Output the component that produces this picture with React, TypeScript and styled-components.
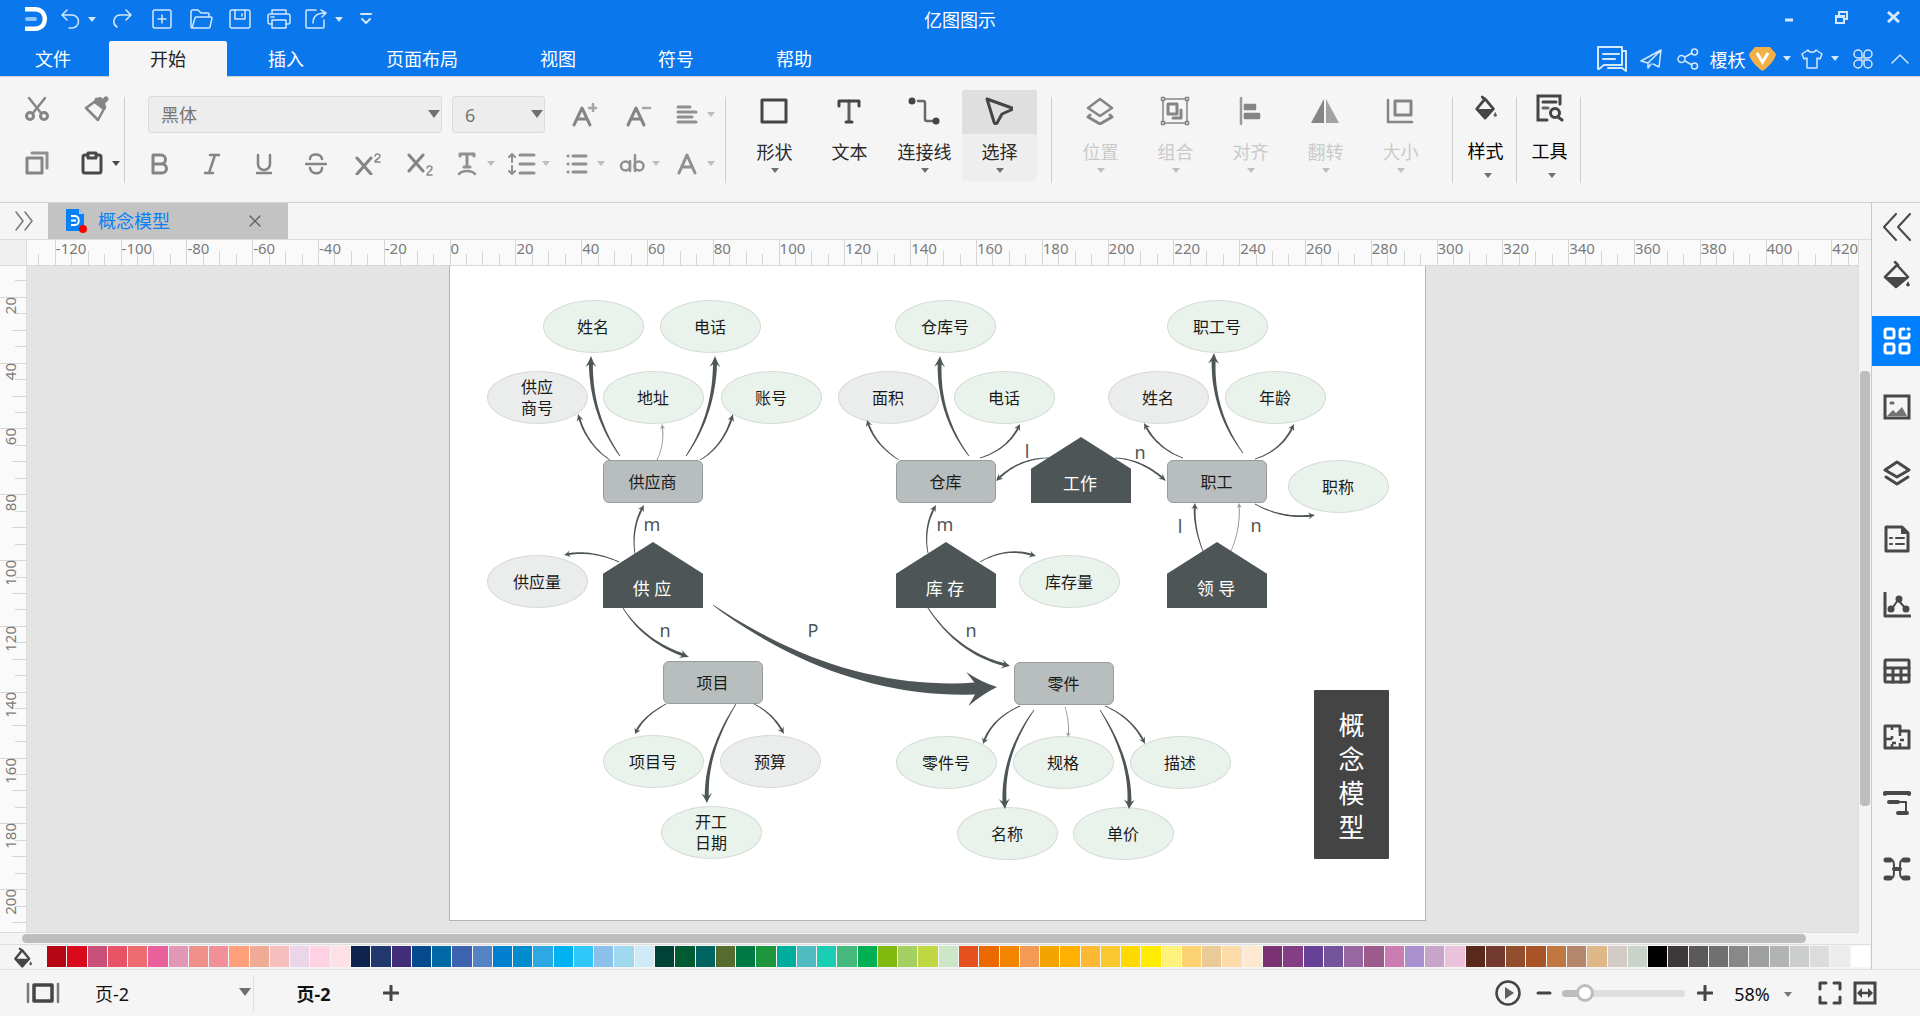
import React from 'react';
import styled, { createGlobalStyle, css } from 'styled-components';

const GlobalStyle = createGlobalStyle`
  *, *::before, *::after { box-sizing: border-box; }
  html, body { margin: 0; padding: 0; }
  body {
    font-family: "Noto Sans", "Noto Sans CJK SC", sans-serif;
    font-size: 18px;
    color: #222;
    background: #f5f5f5;
  }
  button, input, select { font: inherit; color: inherit; }
  svg { display: block; flex: none; }
`;

/* ---------- icons ---------- */

type IconProps = { w: number; h: number; sw?: number; outW?: number; outH?: number; children: React.ReactNode };
const Icon = ({ w, h, sw = 2, outW, outH, children }: IconProps) => (
  <svg
    width={outW ?? w}
    height={outH ?? h}
    viewBox={`0 0 ${w} ${h}`}
    fill="none"
    stroke="currentColor"
    strokeWidth={sw}
    strokeLinecap="round"
    strokeLinejoin="round"
    aria-hidden="true"
  >
    {children}
  </svg>
);

const F = { fill: 'currentColor', stroke: 'none' };

const Caret = ({ size = 8 }: { size?: number }) => (
  <svg width={size} height={size === 8 ? 5 : 8} viewBox="0 0 8 5" preserveAspectRatio="none" aria-hidden="true">
    <path d="M0 0h8L4 5z" fill="currentColor" />
  </svg>
);

const Bucket = ({ w, h }: { w: number; h: number }) => (
  <Icon w={26} h={28} outW={w} outH={h} sw={3}>
    <path d="M9 2l3 3M12 4l9 11-9 10-9-10z" />
    <path d="M3 15h18l-7 9q-2 2-4 0z" {...F} />
    <path d="m23 18 2 4q-2 3-4 0z" {...F} opacity=".85" />
  </Icon>
);

const icons = {
  logo: (
    <svg width="22" height="24" viewBox="0 0 22 24" fill="none" aria-hidden="true">
      <path d="M0 2.2h10c6 0 9.800 4.200 9.800 9.800s-3.800 9.800-9.800 9.800H0" stroke="#fff" strokeWidth="4.400" />
      <path d="M2 12h8" stroke="#8fc1fa" strokeWidth="4" strokeLinecap="round" />
    </svg>
  ),
  undo: <Icon w={20} h={20} sw={1.5}><path d="M7 1 2 6l5 5M2 6h10a6 6 0 0 1 0 13H9" /></Icon>,
  redo: <Icon w={20} h={20} sw={1.5}><path d="m13 1 5 5-5 5M18 6H8a6.500 6.500 0 0 0-4 12" /></Icon>,
  add: <Icon w={20} h={20} sw={1.500}><rect x="1" y="1" width="18" height="18" rx="2" /><path d="M10 6v8M6 10h8" /></Icon>,
  folder: <Icon w={24} h={20} sw={1.500}><path d="M2 17V3a2 2 0 0 1 2-2h5l3 3h7a1 1 0 0 1 1 1v3M3 19 6 9a1 1 0 0 1 1-1h15a1 1 0 0 1 1 1l-2 9a1 1 0 0 1-1 1H3a1 1 0 0 1-1-1" /></Icon>,
  save: <Icon w={22} h={20} sw={1.500}><rect x="1" y="1" width="20" height="18" rx="2" /><path d="M6 1v9h10V1M13 5v2" /></Icon>,
  print: <Icon w={24} h={20} sw={1.500}><path d="M5 5V1h14v4M5 15H3a2 2 0 0 1-2-2V7a2 2 0 0 1 2-2h18a2 2 0 0 1 2 2v6a2 2 0 0 1-2 2h-2M4 8h3" /><path d="M5 11h14v8H5z" /></Icon>,
  exportTo: <Icon w={22} h={20} sw={1.500}><path d="M11 1H2a1 1 0 0 0-1 1v16a1 1 0 0 0 1 1h16a1 1 0 0 0 1-1v-7M8 14c0-6 4-10 12-10M16 1l5 3-4 4" /></Icon>,
  more: <Icon w={12} h={12} sw={2}><path d="M1 1h10M2 6l4 4 4-4" /></Icon>,
  minimize: <Icon w={10} h={12} sw={3}><path d="M1 9h8" strokeLinecap="butt" /></Icon>,
  restore: <Icon w={13} h={13} sw={2}><path d="M4 4V1h8v7H9M1 5h8v7H1zM1 6h8" strokeLinejoin="miter" /></Icon>,
  close: <Icon w={13} h={12} sw={3}><path d="m1 1 11 10M12 1 1 11" strokeLinecap="butt" /></Icon>,
  comment: <Icon w={30} h={26} sw={2}><path d="M1 1h24v18H7l-5 4H1zM26 5h3v20l-4-3H11M6 8h16M6 13h12" /></Icon>,
  plane: <Icon w={22} h={20} sw={1.500}><path d="M21 1 1 12l7 2L21 1l-2 17-6-3M8 14v5l3-4" /></Icon>,
  share: <Icon w={22} h={22} sw={1.500}><circle cx="4.500" cy="11" r="3.500" /><circle cx="17.500" cy="4" r="3" /><circle cx="17.500" cy="18" r="3" /><path d="m8 9 7-4M8 13l7 4" /></Icon>,
  badge: (
    <svg width="27" height="24" viewBox="0 0 27 24" aria-hidden="true">
      <path d="M6 0h15l6 7c0 5-9 14-12 16q-1.500 1.500-3 0C9 21 0 12 0 7z" fill="#f4b048" />
      <path d="m8 6 5.500 9L19 6" fill="none" stroke="#fff" strokeWidth="3" />
    </svg>
  ),
  shirt: <Icon w={22} h={20} sw={1.500}><path d="M7 1 1 5l2 5 3-1v10h10V9l3 1 2-5-6-4c-1 3-7 3-8 0z" /></Icon>,
  clover: <Icon w={20} h={20} sw={1.500}><path d="M9 9V5a4 4 0 1 0-4 4zM11 9V5a4 4 0 1 1 4 4zM9 11v4a4 4 0 1 1-4-4zM11 11v4a4 4 0 1 0 4-4z" /></Icon>,
  up: <Icon w={18} h={10} sw={1.500}><path d="m1 9 8-8 8 8" /></Icon>,

  cut: <Icon w={24} h={26} sw={2.500}><circle cx="5" cy="20" r="3.500" strokeWidth="3" /><circle cx="19" cy="20" r="3.500" strokeWidth="3" /><path d="M4 2l12 15M20 2 8 17" /></Icon>,
  painter: <Icon w={28} h={26} sw={2.500}><path d="M5 12 16 4l8 7-7 13z" /><path d="m14 2 6-1 4 4 1 8-3 1-9-7z" {...F} /><path d="m21 7 4-4" strokeWidth="5" /></Icon>,
  copy: <Icon w={24} h={24} sw={3}><rect x="2" y="7" width="15" height="15" /><path d="M7 2h15v15" strokeWidth="3" opacity=".9" /></Icon>,
  paste: <Icon w={22} h={24} sw={3}><rect x="2" y="4" width="18" height="18" rx="2" /><path d="M7 2h8v5H7z" fill="#f5f5f5" /></Icon>,
  fontUp: <Icon w={26} h={24} sw={3}><path d="m2 22 8-17 8 17M5 16h10" /><path d="M21 1v7M17 5h7" strokeWidth="2.500" opacity=".7" /></Icon>,
  fontDown: <Icon w={26} h={24} sw={3}><path d="m2 22 8-17 8 17M5 16h10" /><path d="M17 5h7" strokeWidth="2.500" opacity=".7" /></Icon>,
  align: <Icon w={22} h={20} sw={3}><path d="M2 2h12M2 7h18M2 12h14M2 17h18" /></Icon>,
  bold: <Icon w={20} h={22} sw={3}><path d="M3 2h8a4 4 0 0 1 0 9H3zM3 11h9a4 4 0 0 1 0 9H3z" /></Icon>,
  italic: <Icon w={20} h={22} sw={2.500}><path d="M8 2h9M3 20h8M13 2 7 20" /></Icon>,
  underline: <Icon w={18} h={22} sw={2.500}><path d="M3 2v9a6 6 0 0 0 12 0V2M2 20h14" /></Icon>,
  strike: <Icon w={22} h={22} sw={2.500}><path d="M1 11h20M17 6c-1-6-12-6-12 0M5 15c1 7 12 7 12 0" /></Icon>,
  sup: <Icon w={26} h={22} sw={3}><path d="m2 5 14 16M16 5 2 21" /><path d="M20 3c1-3 5-2 5 0 0 3-5 3-5 6h5" strokeWidth="1.500" /></Icon>,
  sub: <Icon w={26} h={24} sw={3}><path d="m2 3 14 16M16 3 2 19" /><path d="M20 16c1-3 5-2 5 0 0 3-5 4-5 7h5" strokeWidth="1.500" /></Icon>,
  textEdge: <Icon w={20} h={24} sw={3}><path d="M3 4V2h14v2M10 2v13M7 15h6" /><path d="M2 22c3-4 13-4 16 0" strokeWidth="2.500" /></Icon>,
  spacing: <Icon w={28} h={24} sw={3}><path d="M12 3h14M12 12h14M12 21h14" /><path d="M4 2v8M1 5l3-3 3 3M4 14v8M1 19l3 3 3-3" strokeWidth="2" /></Icon>,
  list: <Icon w={22} h={22} sw={3}><path d="M7 3h13M7 11h13M7 19h13M2 3h.1M2 11h.1M2 19h.1" /></Icon>,
  highlight: <Icon w={26} h={20} sw={2.500}><circle cx="6.500" cy="12" r="4.500" /><path d="M11 7v10" /><path d="M16 1v16" /><circle cx="20" cy="12" r="4.500" /></Icon>,
  fontColor: <Icon w={20} h={22} sw={3}><path d="m2 20 8-18 8 18M5 14h10" /></Icon>,

  shape: <Icon w={28} h={26} sw={3}><rect x="2" y="2" width="24" height="22" /></Icon>,
  text: <Icon w={24} h={26} sw={3}><path d="M2 8V3h20v5M9 24h6" /><path d="M12 3v20" opacity=".85" /></Icon>,
  connector: <Icon w={32} h={28} sw={2.500}><path d="M10 4h5a2 2 0 0 1 2 2v16a2 2 0 0 0 2 2h5" opacity=".8" /><circle cx="4" cy="4" r="3.500" {...F} /><circle cx="28" cy="24" r="3.500" {...F} /></Icon>,
  select: <Icon w={28} h={28} sw={3}><path d="M2 2 27 11q1 1-1 2l-9 4-5 9q-2 2-3-1z" /></Icon>,
  position: <Icon w={28} h={28} sw={2.500}><path d="M14 2 26 11 14 19 2 11z" /><path d="m4 18-2 2 12 7 12-7-2-2" strokeWidth="3" /></Icon>,
  group: <Icon w={30} h={30} sw={1.500}><path d="M3 3h24v24H3z" /><rect x="8" y="8" width="9" height="10" strokeWidth="3" /><path d="M21 14v8h-8" strokeWidth="3" /><path d="M1.500 1.500h3v3h-3zM25.500 1.500h3v3h-3zM1.500 25.500h3v3h-3zM25.500 25.500h3v3h-3z" fill="#f5f5f5" /></Icon>,
  arrange: <Icon w={22} h={28} sw={2.500}><path d="M2 1v26" opacity=".8" /><path d="M6 8h10v4H6zM6 17h14v4H6z" fill="currentColor" /></Icon>,
  flip: <Icon w={28} h={26}><path d="M13 1v24H0z" {...F} /><path d="M15 1v24h13z" {...F} opacity=".75" /></Icon>,
  size: <Icon w={28} h={26} sw={2.500}><path d="M2 2v22h24" /><rect x="9" y="3" width="16" height="14" strokeWidth="3" /></Icon>,
  tools: <Icon w={28} h={28} sw={3}><path d="M24 10V2H2v24h9M7 8h13" strokeLinejoin="miter" /><path d="M7 14h5" opacity=".8" /><circle cx="19" cy="19" r="4.500" /><path d="m22 23 4 3" /></Icon>,

  expand: <Icon w={20} h={20} sw={1.500}><path d="m2 1 7 9-7 9M11 1l7 9-7 9" /></Icon>,
  file: (
    <svg width="22" height="26" viewBox="0 0 22 26" aria-hidden="true">
      <path d="M1 2q0-1 1-1h12l5 5v16q0 1-1 1H2q-1 0-1-1z" fill="#0a80f5" />
      <path d="M14 1l5 5h-5z" fill="#9fcbf8" />
      <path d="M6 8h4c5 0 5 9 0 9H6M6 12.500h5" fill="none" stroke="#fff" strokeWidth="2" />
      <circle cx="18" cy="21" r="4" fill="#f00" />
    </svg>
  ),
  tabClose: <Icon w={12} h={12} sw={1.500}><path d="m1 1 10 10M11 1 1 11" /></Icon>,

  collapse: <Icon w={28} h={28} sw={2}><path d="M13 1 1 14l12 13M27 1 15 14l12 13" /></Icon>,
  sideBucket: <Icon w={28} h={28} sw={2.500}><path d="M12 1l3 3M14 4l11 12-12 10L2 16z" /><path d="M2 16h22L13 27z" {...F} /><path d="m25 20 2 4q-2 3-4 0z" {...F} /></Icon>,
  library: <Icon w={28} h={28} sw={3}><rect x="2" y="2" width="9" height="9" rx="2" /><rect x="2" y="17" width="9" height="9" rx="2" /><rect x="17" y="17" width="9" height="9" rx="2" /><path d="M21 2h-2a2 2 0 0 0-2 2v5a2 2 0 0 0 2 2h5a2 2 0 0 0 2-2V7M25 2h1" /></Icon>,
  image: <Icon w={28} h={26} sw={3}><rect x="2" y="2" width="24" height="22" strokeLinejoin="miter" /><path d="m4 22 6-6 3 3 6-6 5 9z" {...F} opacity=".75" /><path d="M8 9h2" opacity=".8" /></Icon>,
  layers: <Icon w={28} h={28} sw={3}><path d="M14 3 26 11 14 18 2 11z" /><path d="m3 18 11 7 11-7" /></Icon>,
  doc: <Icon w={26} h={28} sw={3}><path d="M2 2h16l6 6v18H2z" /><path d="m17 1 8 8h-8z" {...F} /><path d="M12 13h8M12 19h8M6 13h2M6 19h2" strokeWidth="2" /></Icon>,
  chart: <Icon w={28} h={26} sw={3}><path d="M2 1v23h25" /><path d="m8 18 7-10 9 10" strokeWidth="2" /><circle cx="8" cy="17" r="3.500" {...F} /><circle cx="16" cy="7" r="3.500" {...F} /><circle cx="23" cy="17" r="3.500" {...F} /></Icon>,
  table: <Icon w={28} h={26} sw={3}><rect x="2" y="2" width="24" height="22" rx="1" /><path d="M2 10h24M2 17h24M10 10v14M18 10v14" /></Icon>,
  floor: <Icon w={28} h={26} sw={3}><path d="M2 2h15v5h9v17H2z" /><path d="M2 15h7M9 15v-3M9 2v4M9 20v4M13 19H9M17 7v5M17 16h4M17 19v5" strokeWidth="2.500" strokeLinecap="butt" /></Icon>,
  gantt: <Icon w={28} h={26} sw={3.500}><path d="M2 4V3h24v1M6 12h9M15 23h9" strokeWidth="4" /><path d="M15 12h8v10" strokeWidth="2" /></Icon>,
  mind: <Icon w={28} h={26} sw={2}><path d="M7 4h1c3 0 3 3 3 9s0 9-3 9H7M21 4h-1c-3 0-3 3-3 9s0 9 3 9h1" /><path d="M11 13h6" strokeWidth="4" /><path d="M3 4h4M21 4h4M3 22h4M21 22h4" strokeWidth="5" /></Icon>,

  pages: <Icon w={34} h={24} sw={3.500}><rect x="8" y="4" width="18" height="16" /><path d="M2 3v18M32 3v18" strokeWidth="2.500" opacity=".7" /></Icon>,
  plus: <Icon w={16} h={16} sw={3}><path d="M8 1v14M1 8h14" /></Icon>,
  minus: <Icon w={16} h={16} sw={3}><path d="M2 8h12" /></Icon>,
  play: <Icon w={26} h={26} sw={2.500}><circle cx="13" cy="13" r="11.500" /><path d="M10 7v12l9-6z" {...F} opacity=".85" /></Icon>,
  full: <Icon w={24} h={24} sw={3}><path d="M2 8V2h6M16 2h6v6M22 16v6h-6M8 22H2v-6" /></Icon>,
  fit: <Icon w={24} h={24} sw={3}><rect x="2" y="2" width="20" height="20" strokeLinejoin="miter" /><path d="M6 12h12" strokeWidth="2.500" /><path d="M9 7v10l-5-5zM15 7v10l5-5z" {...F} /></Icon>,
};

/* ---------- shell ---------- */

const Shell = styled.div`
  display: flex;
  flex-direction: column;
  height: 100vh;
  overflow: hidden;
`;

const Plain = styled.button`
  display: flex;
  align-items: center;
  justify-content: center;
  border: 0;
  padding: 0;
  background: none;
  cursor: pointer;
`;

const Header = styled.header`
  background: #0a77ec;
  color: #d3e7fd;
  border-bottom: 1px solid #cfcfcf;
`;

const TitleBar = styled.div`
  display: grid;
  grid-template-columns: 1fr auto 1fr;
  height: 41px;
`;

const AppTitle = styled.h1`
  margin: 0;
  font-size: 18px;
  font-weight: 400;
  line-height: 41px;
  color: #fff;
`;

const QuickBar = styled.div`
  display: flex;
  height: 38px;
  padding-left: 25px;
  align-items: center;
`;

const QuickButton = styled(Plain)<{ $w?: number }>`
  width: ${(p) => p.$w ?? 39}px;
  height: 38px;
  gap: 8px;
`;

const WindowButtons = styled.div`
  display: flex;
  justify-content: flex-end;
  padding-right: 1px;
`;

const WindowButton = styled(Plain)`
  width: 52px;
  height: 34px;
`;

const MenuRow = styled.div`
  display: flex;
  justify-content: space-between;
  height: 35px;
`;

const MenuTabs = styled.nav`
  display: flex;
`;

const MenuTab = styled(Plain)<{ $active?: boolean; $lead?: boolean }>`
  padding: ${(p) => (p.$lead ? '0 38px 0 35px' : '0 41px')};
  height: 36px;
  line-height: 36px;
  color: #fff;
  ${(p) =>
    p.$active &&
    css`
      background: #f5f5f5;
      color: #222;
      border-radius: 2px 2px 0 0;
    `}
`;

const AccountBar = styled.div`
  display: flex;
  align-items: center;
`;

const AccountButton = styled(Plain)<{ $w: number; $gap?: number }>`
  width: ${(p) => p.$w}px;
  height: 34px;
  gap: ${(p) => p.$gap ?? 8}px;
`;

const UserName = styled.span`
  color: #fff;
  margin-right: -4px;
`;

/* ---------- ribbon ---------- */

const Ribbon = styled.div`
  display: flex;
  height: 126px;
  flex: none;
  background: #f5f5f5;
  border-bottom: 1px solid #d2d2d2;
  color: #858585;
`;

const Divider = styled.div`
  width: 1px;
  height: 86px;
  margin-top: 20px;
  background: #cfcfcf;
`;

const Clipboard = styled.div`
  display: grid;
  grid-template-columns: 60px 57px;
  grid-template-rows: 54px 54px;
  padding: 5px 0 0 7px;
`;

const ClipButton = styled(Plain)<{ $start?: boolean; $dark?: boolean }>`
  gap: 9px;
  ${(p) => p.$start && css`justify-content: flex-start; padding-left: 14px;`}
  ${(p) => p.$dark && css`color: #484848;`}
`;

const FontGroup = styled.div`
  width: 600px;
  padding-top: 13px;
`;

const FontRow = styled.div<{ $indent: number }>`
  display: flex;
  align-items: center;
  height: 49px;
  padding-left: ${(p) => p.$indent}px;
`;

const SelectBox = styled.label<{ $w: number }>`
  position: relative;
  display: block;
  width: ${(p) => p.$w}px;
  & + & { margin-left: 10px; }
`;

const SelectCaret = styled.span`
  position: absolute;
  right: 2px;
  top: 50%;
  margin-top: -5px;
  color: #707070;
  pointer-events: none;
`;

const FieldSelect = styled.select`
  appearance: none;
  width: 100%;
  height: 37px;
  padding: 0 20px 0 12px;
  border: 1px solid #dcdcdf;
  border-radius: 3px;
  background: #ededed;
  color: #777;
`;

const FormatButton = styled(Plain)<{ $w: number }>`
  width: ${(p) => p.$w}px;
  height: 40px;
`;

const DropButton = styled(Plain)`
  width: 55px;
  height: 40px;
  justify-content: flex-start;
  padding-left: 7px;
  gap: 8px;
  color: #909090;
  & > svg:last-child { color: #bdbdbd; }
`;

const IconSlot = styled.span`
  display: flex;
  justify-content: center;
  width: 24px;
`;

const Spacer = styled.span<{ $w: number }>`
  width: ${(p) => p.$w}px;
`;

const ToolGroup = styled.div`
  display: flex;
  align-items: flex-start;
  padding: 13px 14px 0 11px;
`;

const BigButton = styled(Plain)<{ $active?: boolean; $off?: boolean; $strong?: boolean }>`
  flex-direction: column;
  justify-content: flex-start;
  width: ${(p) => (p.$strong ? 63 : 75)}px;
  height: 91px;
  padding-left: ${(p) => (p.$strong ? 2 : 0)}px;
  border-radius: 3px;
  overflow: hidden;
  color: ${(p) => (p.$off ? '#858585' : '#454545')};
  background: ${(p) => (p.$active ? '#eee' : 'none')};
`;

const BigIcon = styled.span<{ $active?: boolean; $strong?: boolean }>`
  display: flex;
  align-items: center;
  justify-content: center;
  width: 100%;
  height: 44px;
  padding: ${(p) => (p.$strong ? '0 0 8px' : '0 2px 2px 0')};
  background: ${(p) => (p.$active ? '#dfdfdf' : 'none')};
`;

const BigLabel = styled.span<{ $off?: boolean; $strong?: boolean }>`
  padding-top: ${(p) => (p.$strong ? 5 : 6)}px;
  line-height: 24px;
  white-space: nowrap;
  color: ${(p) => (p.$off ? '#cacaca' : p.$strong ? '#000' : '#2a2a2a')};
`;

const BigCaret = styled.span<{ $off?: boolean; $strong?: boolean }>`
  padding: ${(p) => (p.$strong ? '10px 0 0 4px' : '4px 0 0')};
  color: ${(p) => (p.$off ? '#bfbfbf' : '#707070')};
`;

const SoloTool = styled.div`
  padding-top: 13px;
`;

/* ---------- workspace ---------- */

const Main = styled.main`
  display: flex;
  flex: 1;
  min-height: 0;
  border-bottom: 1px solid #dedede;
`;

const Workspace = styled.section`
  display: flex;
  flex-direction: column;
  flex: 1;
  min-width: 0;
`;

const DocTabs = styled.div`
  display: flex;
  height: 37px;
  flex: none;
  border-bottom: 1px solid #dcdcdc;
`;

const ExpandButton = styled(Plain)`
  width: 48px;
  color: #777;
`;

const DocTab = styled.div`
  display: flex;
  align-items: center;
  width: 240px;
  padding: 0 27px 0 17px;
  background: #c3c3c3;
  color: #0a80f5;
`;

const DocName = styled.span`
  flex: 1;
  padding-left: 11px;
  line-height: 36px;
`;

const DocClose = styled(Plain)`
  color: #666;
`;

const Body = styled.div`
  display: flex;
  flex: 1;
  min-height: 0;
`;

const Board = styled.div`
  display: grid;
  flex: 1;
  min-width: 0;
  grid-template-columns: 27px minmax(0, 1fr);
  grid-template-rows: 26px minmax(0, 1fr);
  border-bottom: 1px solid #dcdcdc;
`;

const Corner = styled.div`
  background: #efefef;
  border-right: 1px solid #dcdcdc;
  border-bottom: 1px solid #dcdcdc;
`;

/* The transparent top padding keeps the labels' line boxes inside the clipped strip */
const TopRuler = styled.div`
  overflow: hidden;
  margin-top: -4px;
  padding-top: 4px;
  background: #fafafa;
  background-clip: content-box;
  border-bottom: 1px solid #d8d8d8;
`;

const TopScale = styled.div`
  display: flex;
  width: 1908px;
  height: 25px;
  margin-left: -38px;
`;

const TopStep = styled.div`
  position: relative;
  flex: 1;
  display: grid;
  grid-template-columns: repeat(4, 1fr);
  align-items: end;
`;

const TopTick = styled.i`
  border-left: 1px solid #d6d6d6;
  height: 11px;
  &:nth-of-type(1) { height: 25px; }
  &:nth-of-type(3) { height: 14px; }
`;

const TopLabel = styled.span`
  position: absolute;
  left: 1px;
  top: -2px;
  font-size: 15px;
  line-height: 20px;
  color: #7b7b7b;
`;

const SideRuler = styled.div`
  overflow: hidden;
  background: #fafafa;
  border-right: 1px solid #dcdcdc;
`;

const SideScale = styled.div`
  display: flex;
  flex-direction: column;
  width: 26px;
  height: 724px;
  margin-top: -35px;
`;

const SideStep = styled.div`
  position: relative;
  flex: 1;
  display: grid;
  grid-template-rows: repeat(4, 1fr);
  justify-items: end;
`;

const SideTick = styled.i`
  border-top: 1px solid #d6d6d6;
  width: 11px;
  &:nth-of-type(1) { width: 26px; }
  &:nth-of-type(3) { width: 14px; }
`;

const SideLabel = styled.span`
  position: absolute;
  left: 0;
  top: 0;
  writing-mode: vertical-rl;
  transform: rotate(180deg);
  font-size: 15px;
  line-height: 20px;
  color: #7b7b7b;
`;

const Canvas = styled.div`
  overflow: hidden;
  background: #e4e4e4;
`;

const Page = styled.div`
  position: relative;
  width: 977px;
  height: 655px;
  margin-left: 422px;
  background: #fff;
  border: 1px solid #b4b4b4;
  border-top: 0;
`;

const VScroll = styled.div`
  width: 13px;
  margin-bottom: 1px;
  padding: 131px 1px 0;
  background: #f4f4f4;
  border-left: 1px solid #dcdcdc;
`;

const VThumb = styled.div`
  width: 10px;
  height: 435px;
  border-radius: 4px;
  background: #bdbdbd;
`;

const HScroll = styled.div`
  height: 11px;
  flex: none;
  padding: 1px 65px 1px 22px;
  background: #f4f4f4;
`;

const HThumb = styled.div`
  height: 9px;
  border-radius: 5px;
  background: #bdbdbd;
`;

const PaletteRow = styled.div`
  display: flex;
  align-items: flex-start;
  height: 25px;
  flex: none;
  padding-top: 1px;
  border-top: 1px solid #dedede;
`;

const FillButton = styled(Plain)`
  width: 46px;
  height: 23px;
  margin-right: 1px;
  color: #454545;
`;

const Swatches = styled.div`
  flex: 1;
  display: grid;
  grid-template-columns: repeat(90, minmax(0, 1fr));
  column-gap: 1px;
  margin-right: 1px;
`;

const Swatch = styled.button<{ $c: string }>`
  height: 21px;
  padding: 0;
  border: 0;
  background: ${(p) => p.$c};
`;

const Sidebar = styled.aside`
  display: flex;
  flex-direction: column;
  width: 49px;
  border-left: 1px solid #c9c9c9;
  color: #484848;
`;

const SideButton = styled(Plain)<{ $active?: boolean }>`
  flex: none;
  height: 50px;
  padding-left: 2px;
  margin-bottom: 16px;
  ${(p) => p.$active && css`background: #0080ff; color: #fff;`}
`;

const CollapseButton = styled(SideButton)`
  height: 47px;
  margin-bottom: 0;
`;

/* ---------- diagram ---------- */

const Node = styled.div<{ $x: number; $y: number }>`
  position: absolute;
  left: ${(p) => p.$x - 450}px;
  top: ${(p) => p.$y - 266}px;
  display: flex;
  align-items: center;
  justify-content: center;
  text-align: center;
  font-size: 16px;
  line-height: 21px;
  white-space: pre-line;
  color: #1a1a1a;
`;

const Oval = styled(Node)<{ $key?: boolean }>`
  width: 101px;
  height: 53px;
  padding: 1px 1px 0 0;
  border: 1px solid #d5dad7;
  border-radius: 50%;
  background: ${(p) => (p.$key ? '#ebecec' : '#e9f3ec')};
`;

const Entity = styled(Node)`
  width: 100px;
  height: 43px;
  padding: 2px 1px 0 0;
  border: 1px solid #979d9f;
  border-radius: 6px;
  background: #b8bdbd;
`;

const Relation = styled(Node)`
  width: 100px;
  height: 66px;
  padding: 26px 2px 0 0;
  font-size: 17px;
  color: #fff;
  background: #4d5556;
  clip-path: polygon(50% 0, 100% 48%, 100% 100%, 0 100%, 0 48%);
`;

const Banner = styled(Node)`
  width: 75px;
  height: 169px;
  padding-top: 2px;
  border-radius: 1px;
  background: #444;
  color: #fff;
  font-size: 26px;
  line-height: 34px;
`;

const Cardinality = styled(Node)`
  width: 20px;
  height: 24px;
  font-size: 18px;
  color: #4d5556;
`;

const Links = styled.svg`
  position: absolute;
  left: 0;
  top: 0;
  pointer-events: none;
`;

type Placed = [string, number, number, boolean?];

const ovals: Placed[] = [
  ['姓名', 543, 300], ['电话', 660, 300], ['供应\n商号', 487, 371, true], ['地址', 603, 371], ['账号', 721, 371],
  ['仓库号', 895, 300], ['面积', 838, 371, true], ['电话', 954, 371],
  ['职工号', 1167, 300], ['姓名', 1108, 371, true], ['年龄', 1225, 371], ['职称', 1288, 460],
  ['供应量', 487, 555, true], ['库存量', 1019, 555],
  ['项目号', 603, 735], ['预算', 720, 735, true], ['开工\n日期', 661, 806],
  ['零件号', 896, 736], ['规格', 1013, 736], ['描述', 1130, 736], ['名称', 957, 807], ['单价', 1073, 807],
];
const entities: Placed[] = [['供应商', 603, 460], ['仓库', 896, 460], ['职工', 1167, 460], ['项目', 663, 661], ['零件', 1014, 662]];
const relations: Placed[] = [['供 应', 603, 542], ['库 存', 896, 542], ['领 导', 1167, 542], ['工作', 1031, 437]];
const cards: Placed[] = [
  ['m', 642, 512], ['m', 935, 512], ['n', 655, 618], ['P', 803, 618], ['n', 961, 618],
  ['l', 1017, 439], ['n', 1130, 440], ['l', 1170, 514], ['n', 1246, 513],
];

/* start, control and end point, then the stroke width at the head */
const links: number[][] = [
  [620, 456, 589, 412, 591, 356, 4], [686, 456, 716, 412, 715, 356, 4],
  [610, 460, 586, 444, 578, 414, 2], [657, 460, 665, 444, 662, 424, 1], [700, 460, 724, 446, 733, 414, 2],
  [969, 456, 936, 412, 940, 356, 4], [899, 460, 874, 444, 867, 420, 2], [980, 458, 1009, 449, 1020, 424, 2],
  [1049, 458, 1018, 458, 996, 481, 2], [1115, 458, 1142, 459, 1166, 481, 2],
  [1243, 453, 1210, 408, 1214, 353, 4], [1183, 458, 1156, 448, 1144, 423, 2], [1255, 459, 1283, 450, 1294, 424, 2],
  [1255, 504, 1284, 520, 1315, 515, 2], [1203, 551, 1193, 526, 1195, 503, 2], [1231, 551, 1241, 528, 1239, 503, 1],
  [928, 553, 923, 527, 936, 505, 2], [980, 562, 1007, 546, 1036, 556, 2],
  [635, 554, 631, 527, 644, 505, 2], [619, 562, 590, 549, 564, 555, 2],
  [623, 608, 645, 643, 689, 657, 3], [713, 605, 850, 702, 997, 687, 12], [926, 605, 958, 655, 1010, 666, 3],
  [666, 704, 642, 717, 635, 734, 2], [736, 704, 704, 755, 707, 803, 4], [754, 704, 774, 714, 784, 734, 2],
  [1020, 706, 991, 719, 983, 744, 2], [1034, 710, 1000, 758, 1005, 809, 4], [1065, 707, 1070, 724, 1068, 737, 1],
  [1100, 710, 1133, 762, 1129, 809, 4], [1105, 706, 1133, 718, 1145, 744, 2],
];

/* A tapered quadratic curve that ends in a barbed head */
function taperedArrow([x0, y0, cx, cy, x1, y1, w]: number[]) {
  const at = (t: number) => {
    const u = 1 - t;
    return [u * u * x0 + 2 * u * t * cx + t * t * x1, u * u * y0 + 2 * u * t * cy + t * t * y1];
  };
  const len = Math.hypot(cx - x0, cy - y0) + Math.hypot(x1 - cx, y1 - cy);
  const big = w > 8;
  const head = big ? 32 : w * 2 + 3;
  const half = big ? 17 : w + 1.5;
  const tEnd = 1 - (head * 0.75) / len;
  const left: string[] = [];
  const right: string[] = [];
  const steps = 24;
  for (let i = 0; i <= steps; i++) {
    const t = (tEnd * i) / steps;
    const [x, y] = at(t);
    const dx = (1 - t) * (cx - x0) + t * (x1 - cx);
    const dy = (1 - t) * (cy - y0) + t * (y1 - cy);
    const d = Math.hypot(dx, dy);
    const r = 0.4 + (w / 2 - 0.4) * Math.pow(i / steps, 0.85);
    left.push(`${(x - (dy / d) * r).toFixed(1)} ${(y + (dx / d) * r).toFixed(1)}`);
    right.unshift(`${(x + (dy / d) * r).toFixed(1)} ${(y - (dx / d) * r).toFixed(1)}`);
  }
  const [bx, by] = at(1 - head / len);
  const d = Math.hypot(x1 - bx, y1 - by);
  const nx = -(y1 - by) / d;
  const ny = (x1 - bx) / d;
  const barb = (s: number) => `${(bx + nx * half * s).toFixed(1)} ${(by + ny * half * s).toFixed(1)}`;
  const [mx, my] = at(1 - (head * 0.5) / len);
  const q = (s: number) => `${(mx + nx * half * 0.35 * s).toFixed(1)} ${(my + ny * half * 0.35 * s).toFixed(1)}`;
  return `M${left.join('L')}L${barb(1)}Q${q(1)} ${x1} ${y1}Q${q(-1)} ${barb(-1)}L${right.join('L')}Z`;
}

const Diagram = () => (
  <Page>
    {ovals.map(([t, x, y, k]) => <Oval key={`${x}-${y}`} $x={x} $y={y} $key={k}>{t}</Oval>)}
    {entities.map(([t, x, y]) => <Entity key={t} $x={x} $y={y}>{t}</Entity>)}
    {relations.map(([t, x, y]) => <Relation key={t} $x={x} $y={y}>{t}</Relation>)}
    {cards.map(([t, x, y]) => <Cardinality key={`${x}-${y}`} $x={x} $y={y}>{t}</Cardinality>)}
    <Banner $x={1314} $y={690}>{'概\n念\n模\n型'}</Banner>
    <Links width="975" height="654" viewBox="450 266 975 654" aria-hidden="true">
      {links.map((l) => (
        <path key={l.join()} d={taperedArrow(l)} fill={l[6] === 1 ? '#8f9596' : '#4d5556'} />
      ))}
    </Links>
  </Page>
);

/* ---------- status bar ---------- */

const StatusBar = styled.footer`
  display: flex;
  align-items: center;
  justify-content: space-between;
  height: 46px;
  flex: none;
  color: #454545;
`;

const StatusSide = styled.div`
  display: flex;
  align-items: center;
  height: 46px;
`;

const StatusButton = styled(Plain)<{ $w: number }>`
  width: ${(p) => p.$w}px;
  height: 40px;
`;

const PageSelect = styled.select`
  appearance: none;
  width: 100%;
  height: 36px;
  padding: 2px 20px 0 9px;
  border: 0;
  background: none;
  color: #111;
`;

const StatusDivider = styled.div`
  width: 1px;
  height: 36px;
  background: #dedede;
`;

const PageTab = styled(Plain)`
  width: 119px;
  height: 40px;
  font-weight: 700;
  color: #111;
`;

const Zoom = styled.input`
  appearance: none;
  width: 123px;
  height: 20px;
  margin: 0 10px 0 1px;
  background: none;
  &::-webkit-slider-runnable-track {
    height: 7px;
    border-radius: 4px;
    background: linear-gradient(to right, #bdbdbd 18%, #dfdfdf 18%);
  }
  &::-webkit-slider-thumb {
    appearance: none;
    width: 18px;
    height: 18px;
    margin-top: -6px;
    border: 3px solid #bdbdbd;
    border-radius: 50%;
    background: #fff;
  }
`;

const ZoomLevel = styled(Plain)`
  width: 76px;
  gap: 14px;
  margin-right: 13px;
  padding-top: 2px;
  color: #777;
`;

const ZoomValue = styled.span`
  color: #111;
`;

/* ---------- data ---------- */

const palette = `b60614 d90a1c c95078 e85466 ec6c72 e8609c e298b4 ef908a f2909a ff9f7c f0ab96 f6bebd ead6e8 ffd3e4 fee0e6
0f234f 22396f 422d78 064a8e 0068a4 3c62b0 5484c6 0080cf 008ccd 2ea8e2 00b2f0 30c8fa 8cc0ea a0d8ef ceebf7
004236 005a32 006460 566c2e 007a44 1e963e 00ae9e 50bcc2 1acdb4 46ba7e 00b052 80ba0e a4d062 bed742 cde6c7
e4501e ec6800 f28400 f39a54 f3a400 ffb000 fdb933 fac930 ffd900 ffec00 fef27c fdd272 eaca96 fedcaa fde8d0
7a3272 843f84 674196 73549a 9667a0 9d5a8c cb7cb0 a991cf c7a4c8 ebc2db
592a1c 733a30 924d2c a85426 c07840 b4866c deb887 d4cbc6 cad3ca
000000 3e3838 5a5858 707070 888888 9ea0a0 b2b4b4 cccdcd dcdcdc ececec ffffff`
  .split(/\s+/)
  .map((c) => `#${c}`);

const topSteps = Array.from({ length: 29 }, (_, i) => i * 20 - 140);
const sideSteps = Array.from({ length: 11 }, (_, i) => i * 20);

const menus = ['文件', '开始', '插入', '页面布局', '视图', '符号', '帮助'];

type Tool = { label: string; icon: React.ReactNode; off?: boolean; active?: boolean; strong?: boolean; plain?: boolean };
const drawTools: Tool[] = [
  { label: '形状', icon: icons.shape },
  { label: '文本', icon: icons.text, plain: true },
  { label: '连接线', icon: icons.connector },
  { label: '选择', icon: icons.select, active: true },
];
const layoutTools: Tool[] = [
  { label: '位置', icon: icons.position, off: true },
  { label: '组合', icon: icons.group, off: true },
  { label: '对齐', icon: icons.arrange, off: true },
  { label: '翻转', icon: icons.flip, off: true },
  { label: '大小', icon: icons.size, off: true },
];

const ToolButton = ({ label, icon, off, active, strong, plain }: Tool) => (
  <BigButton $off={off} $active={active} $strong={strong}>
    <BigIcon $active={active} $strong={strong}>{icon}</BigIcon>
    <BigLabel $off={off} $strong={strong}>{label}</BigLabel>
    {!plain && <BigCaret $off={off} $strong={strong}><Caret /></BigCaret>}
  </BigButton>
);

const formats: [string, React.ReactNode][] = [
  ['加粗', icons.bold], ['斜体', icons.italic], ['下划线', icons.underline],
  ['删除线', icons.strike], ['上标', icons.sup], ['下标', icons.sub],
];
const dropFormats: [string, React.ReactNode][] = [
  ['文字方向', icons.textEdge], ['行距', icons.spacing], ['项目符号', icons.list],
  ['突出显示', icons.highlight], ['字体颜色', icons.fontColor],
];
const sidePanels: [string, React.ReactNode][] = [
  ['填充', icons.sideBucket],
  ['符号库', icons.library], ['图片', icons.image], ['图层', icons.layers], ['注释', icons.doc], ['图表', icons.chart],
  ['表格', icons.table], ['平面图', icons.floor], ['甘特图', icons.gantt], ['思维导图', icons.mind],
];

export default function App() {
  return (
    <Shell>
      <GlobalStyle />
      <Header>
        <TitleBar>
          <QuickBar>
            {icons.logo}
            <Spacer $w={9} />
            <QuickButton $w={43} aria-label="撤销">{icons.undo}<Caret /></QuickButton>
            <Spacer $w={4} />
            <QuickButton aria-label="重做">{icons.redo}</QuickButton>
            <QuickButton aria-label="新建">{icons.add}</QuickButton>
            <QuickButton aria-label="打开">{icons.folder}</QuickButton>
            <QuickButton aria-label="保存">{icons.save}</QuickButton>
            <QuickButton aria-label="打印">{icons.print}</QuickButton>
            <QuickButton $w={52} aria-label="导出">{icons.exportTo}<Caret /></QuickButton>
            <QuickButton $w={32} aria-label="更多">{icons.more}</QuickButton>
          </QuickBar>
          <AppTitle>亿图图示</AppTitle>
          <WindowButtons>
            <WindowButton aria-label="最小化">{icons.minimize}</WindowButton>
            <WindowButton aria-label="还原">{icons.restore}</WindowButton>
            <WindowButton aria-label="关闭">{icons.close}</WindowButton>
          </WindowButtons>
        </TitleBar>
        <MenuRow>
          <MenuTabs>
            {menus.map((m, i) => <MenuTab key={m} $lead={i === 0} $active={i === 1}>{m}</MenuTab>)}
          </MenuTabs>
          <AccountBar>
            <AccountButton $w={40} aria-label="评论">{icons.comment}</AccountButton>
            <AccountButton $w={38} aria-label="发送">{icons.plane}</AccountButton>
            <AccountButton $w={36} aria-label="分享">{icons.share}</AccountButton>
            <AccountButton $w={88} $gap={7}><UserName>榎枖</UserName>{icons.badge}<Caret /></AccountButton>
            <AccountButton $w={52} aria-label="皮肤">{icons.shirt}<Caret /></AccountButton>
            <AccountButton $w={34} aria-label="应用">{icons.clover}</AccountButton>
            <AccountButton $w={40} aria-label="收起">{icons.up}</AccountButton>
          </AccountBar>
        </MenuRow>
      </Header>

      <Ribbon>
        <Clipboard>
          <ClipButton aria-label="剪切">{icons.cut}</ClipButton>
          <ClipButton $start aria-label="格式刷">{icons.painter}</ClipButton>
          <ClipButton aria-label="复制">{icons.copy}</ClipButton>
          <ClipButton $start $dark aria-label="粘贴">{icons.paste}<Caret /></ClipButton>
        </Clipboard>
        <Divider />
        <FontGroup>
          <FontRow $indent={23}>
            <SelectBox $w={294}>
              <FieldSelect aria-label="字体"><option>黑体</option></FieldSelect>
              <SelectCaret><Caret size={12} /></SelectCaret>
            </SelectBox>
            <SelectBox $w={93}>
              <FieldSelect aria-label="字号"><option>6</option></FieldSelect>
              <SelectCaret><Caret size={12} /></SelectCaret>
            </SelectBox>
            <Spacer $w={13} />
            <FormatButton $w={54} aria-label="增大字号">{icons.fontUp}</FormatButton>
            <FormatButton $w={54} aria-label="减小字号">{icons.fontDown}</FormatButton>
            <Spacer $w={2} />
            <DropButton aria-label="段落对齐"><IconSlot>{icons.align}</IconSlot><Caret /></DropButton>
          </FontRow>
          <FontRow $indent={9}>
            {formats.map(([n, i]) => <FormatButton key={n} $w={52} aria-label={n}>{i}</FormatButton>)}
            <Spacer $w={2} />
            {dropFormats.map(([n, i]) => (
              <DropButton key={n} aria-label={n}><IconSlot>{i}</IconSlot><Caret /></DropButton>
            ))}
          </FontRow>
        </FontGroup>
        <Divider />
        <ToolGroup>{drawTools.map((t) => <ToolButton key={t.label} {...t} />)}</ToolGroup>
        <Divider />
        <ToolGroup>{layoutTools.map((t) => <ToolButton key={t.label} {...t} />)}</ToolGroup>
        <Divider />
        <SoloTool><ToolButton label="样式" icon={<Bucket w={24} h={26} />} strong /></SoloTool>
        <Divider />
        <SoloTool><ToolButton label="工具" icon={icons.tools} strong /></SoloTool>
        <Divider />
      </Ribbon>

      <Main>
        <Workspace>
          <DocTabs>
            <ExpandButton aria-label="展开">{icons.expand}</ExpandButton>
            <DocTab>
              {icons.file}
              <DocName>概念模型</DocName>
              <DocClose aria-label="关闭文档">{icons.tabClose}</DocClose>
            </DocTab>
          </DocTabs>
          <Body>
            <Board>
              <Corner />
              <TopRuler>
                <TopScale>
                  {topSteps.map((n) => (
                    <TopStep key={n}>
                      <TopTick /><TopTick /><TopTick /><TopTick />
                      {n > -140 && n < 440 && <TopLabel>{n}</TopLabel>}
                    </TopStep>
                  ))}
                </TopScale>
              </TopRuler>
              <SideRuler>
                <SideScale>
                  {sideSteps.map((n) => (
                    <SideStep key={n}>
                      <SideTick /><SideTick /><SideTick /><SideTick />
                      {n > 0 && <SideLabel>{n}</SideLabel>}
                    </SideStep>
                  ))}
                </SideScale>
              </SideRuler>
              <Canvas><Diagram /></Canvas>
            </Board>
            <VScroll><VThumb /></VScroll>
          </Body>
          <HScroll><HThumb /></HScroll>
          <PaletteRow>
            <FillButton aria-label="填充颜色"><Bucket w={20} h={22} /></FillButton>
            <Swatches>
              {palette.map((c) => <Swatch key={c} $c={c} aria-label={c} />)}
            </Swatches>
          </PaletteRow>
        </Workspace>
        <Sidebar>
          <CollapseButton aria-label="折叠">{icons.collapse}</CollapseButton>
          {sidePanels.map(([n, i], k) => <SideButton key={n} $active={k === 1} aria-label={n}>{i}</SideButton>)}
        </Sidebar>
      </Main>

      <StatusBar>
        <StatusSide>
          <StatusButton $w={86} aria-label="页面视图">{icons.pages}</StatusButton>
          <SelectBox $w={167}>
            <PageSelect aria-label="页面"><option>页-2</option></PageSelect>
            <SelectCaret><Caret size={12} /></SelectCaret>
          </SelectBox>
          <StatusDivider />
          <PageTab>页-2</PageTab>
          <StatusButton $w={36} aria-label="添加页面">{icons.plus}</StatusButton>
        </StatusSide>
        <StatusSide>
          <StatusButton $w={38} aria-label="播放">{icons.play}</StatusButton>
          <StatusButton $w={34} aria-label="缩小">{icons.minus}</StatusButton>
          <Zoom type="range" min={0} max={100} defaultValue={13} aria-label="缩放" />
          <StatusButton $w={20} aria-label="放大">{icons.plus}</StatusButton>
          <Spacer $w={10} />
          <ZoomLevel><ZoomValue>58%</ZoomValue><Caret /></ZoomLevel>
          <StatusButton $w={32} aria-label="全屏">{icons.full}</StatusButton>
          <StatusButton $w={38} aria-label="适应页面">{icons.fit}</StatusButton>
          <Spacer $w={36} />
        </StatusSide>
      </StatusBar>
    </Shell>
  );
}
